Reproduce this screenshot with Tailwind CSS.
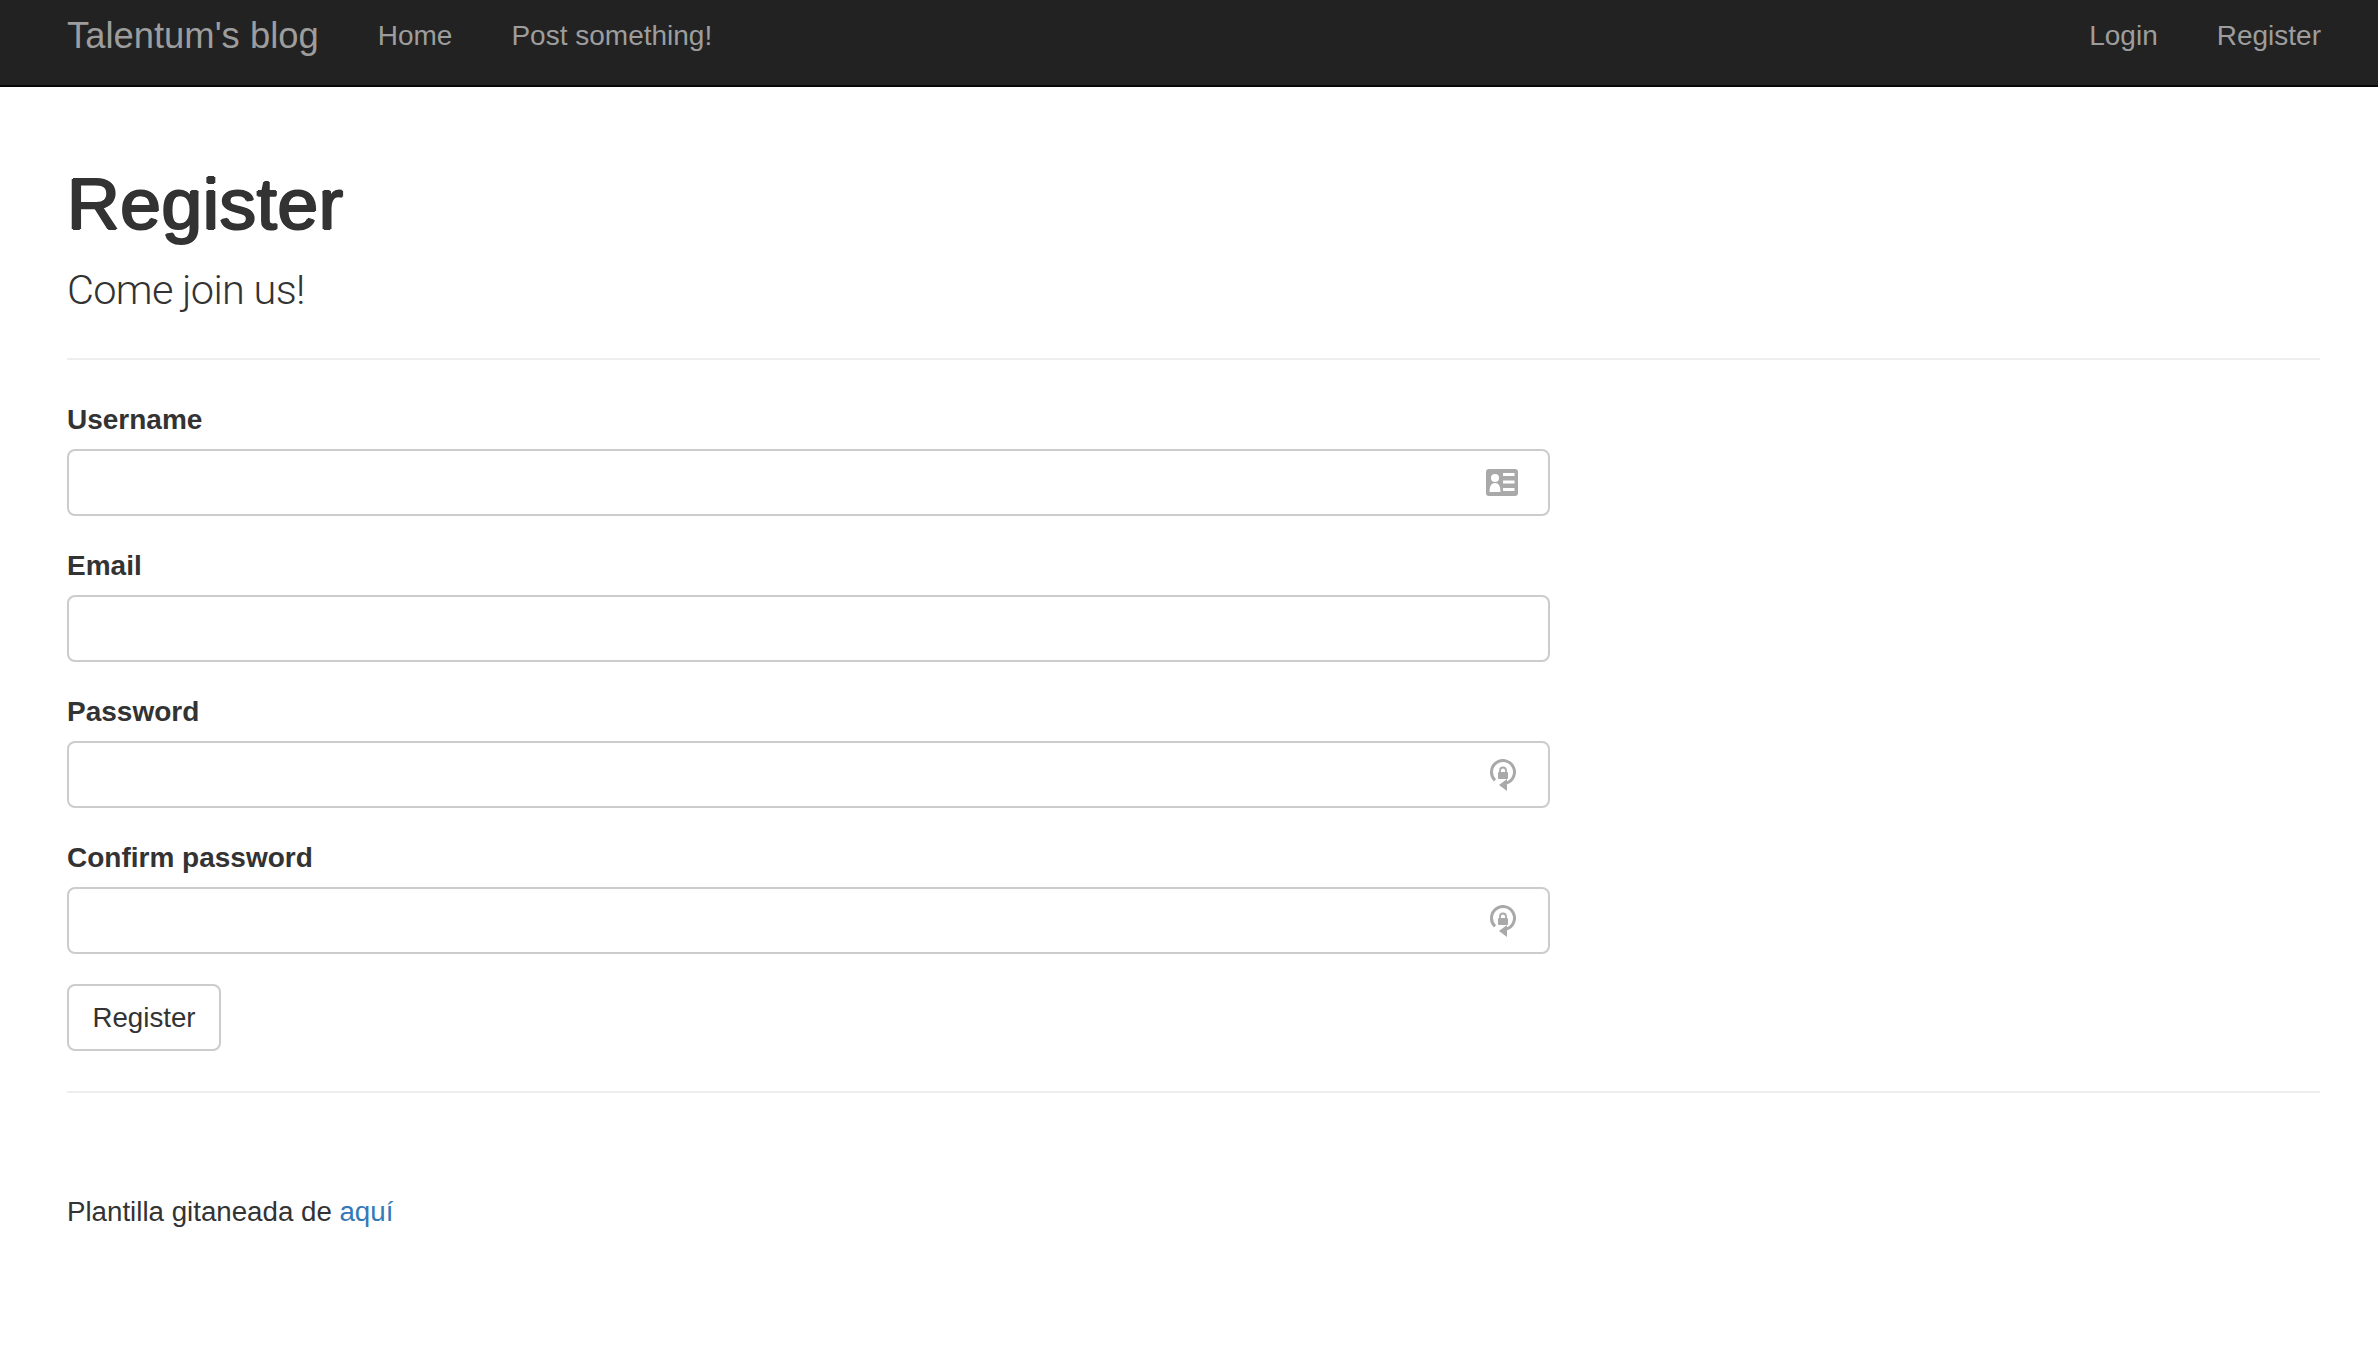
<!DOCTYPE html>
<html lang="en">
<head>
<meta charset="utf-8">
<title>Register</title>
<script src="https://cdn.jsdelivr.net/npm/@tailwindcss/browser@4"></script>
</head>
<body class="bg-white text-[#333] font-['Liberation_Sans',Arial,sans-serif] text-[27.7px] leading-[40px]">
<nav class="h-[87px] bg-[#222] border-b-2 border-[#080808] pl-[67px] pr-[57px] flex justify-between text-[#9d9d9d] text-[28px]">
  <div class="flex items-start pt-[16px]">
    <a class="text-[36.4px] mr-[59px]">Talentum's blog</a>
    <a class="mr-[59px]">Home</a>
    <a>Post something!</a>
  </div>
  <div class="flex items-start pt-[16px] gap-[59px]">
    <a>Login</a>
    <a>Register</a>
  </div>
</nav>
<main class="pl-[67px] pr-[58px]">
  <header class="pt-[78px] pb-[39px] border-b-2 border-[#eee]">
    <h1 class="text-[73px] leading-[78px] font-normal tracking-[0.6px] [text-shadow:1.2px_0_0_#333,-1.2px_0_0_#333,0_0.7px_0_#333,0_-0.7px_0_#333]">Register</h1>
    <p class="text-[41.5px] leading-[58px] mt-[18px] font-['Roboto',sans-serif] font-light tracking-[-0.7px]">Come join us!</p>
  </header>
  <form class="w-[1483px] pt-[39px] flex flex-col gap-[29px]">
    <div class="flex flex-col gap-[9px] pt-[1px]">
      <label class="font-bold text-[28px]">Username</label>
      <div class="relative h-[67px] border-2 border-[#ccc] rounded-lg">
        <svg class="absolute right-[30px] top-[18px]" width="32" height="27" viewBox="0 0 32 27"><rect width="32" height="27" rx="3" fill="#a9a9a9"/><circle cx="9" cy="9" r="4" fill="#fff"/><path d="M3.500 23c0-6 2-9 5.500-9s5.500 3 5.500 9z" fill="#fff"/><path d="M17 4h11.500v3H17zM17 11.500h11.500v3H17zM17 19h11.500v3H17z" fill="#fff"/></svg>
      </div>
    </div>
    <div class="flex flex-col gap-[9px] pt-[1px]">
      <label class="font-bold text-[28px]">Email</label>
      <div class="h-[67px] border-2 border-[#ccc] rounded-lg"></div>
    </div>
    <div class="flex flex-col gap-[9px] pt-[1px]">
      <label class="font-bold text-[28px]">Password</label>
      <div class="relative h-[67px] border-2 border-[#ccc] rounded-lg">
        <svg class="absolute right-[32px] top-[16px]" width="26" height="32" viewBox="0 0 26 32"><path d="M5 21.300A11.500 11.500 0 1 1 16 24.100" fill="none" stroke="#a9a9a9" stroke-width="3"/><path d="M17 20v12l-8-6z" fill="#a9a9a9"/><rect x="8" y="13" width="10" height="7" rx="1" fill="#a9a9a9"/><path d="M10 14v-2.500a3 3 0 0 1 6 0V14" fill="none" stroke="#a9a9a9" stroke-width="1.800"/></svg>
      </div>
    </div>
    <div class="flex flex-col gap-[9px] pt-[1px]">
      <label class="font-bold text-[28px]">Confirm password</label>
      <div class="relative h-[67px] border-2 border-[#ccc] rounded-lg">
        <svg class="absolute right-[32px] top-[16px]" width="26" height="32" viewBox="0 0 26 32"><path d="M5 21.300A11.500 11.500 0 1 1 16 24.100" fill="none" stroke="#a9a9a9" stroke-width="3"/><path d="M17 20v12l-8-6z" fill="#a9a9a9"/><rect x="8" y="13" width="10" height="7" rx="1" fill="#a9a9a9"/><path d="M10 14v-2.500a3 3 0 0 1 6 0V14" fill="none" stroke="#a9a9a9" stroke-width="1.800"/></svg>
      </div>
    </div>
    <button type="button" class="self-start h-[67px] w-[154px] mt-[1px] border-2 border-[#ccc] rounded-lg bg-white">Register</button>
  </form>
  <hr class="mt-[40px] border-t-2 border-[#eee]">
  <p class="mt-[99px]">Plantilla gitaneada de <a class="text-[#337ab7]">aquí</a></p>
</main>
</body>
</html>
